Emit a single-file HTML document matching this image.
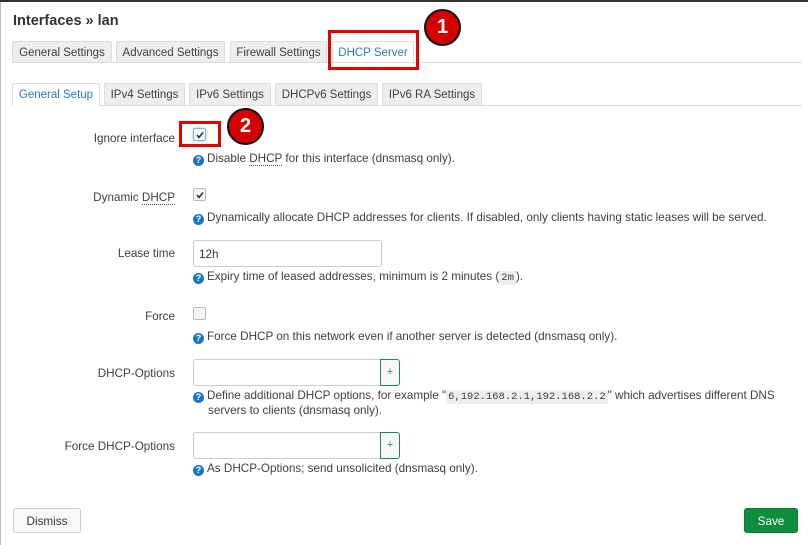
<!DOCTYPE html>
<html><head><meta charset="utf-8"><style>
*{box-sizing:border-box;margin:0;padding:0}
body{width:808px;height:545px;background:#fff;font-family:"Liberation Sans",sans-serif;font-size:11.7px;color:#404040;position:relative;overflow:hidden}
.a{position:absolute}
.topbar{left:0;top:0;width:808px;height:2px;background:#333}
.lborder{left:0;top:2px;width:1px;height:543px;background:#bbb}
h1{position:absolute;left:13px;top:13px;font-size:14.5px;font-weight:bold;color:#333}
.tab{position:absolute;height:22px;border:1px solid #ddd;border-bottom:none;background:#eee;color:#404040;line-height:22px;text-align:center;font-size:11.5px;border-radius:2px 2px 0 0;white-space:nowrap}
.tab.on{background:#fff;color:#2a7ab9;height:23px}
.line{position:absolute;height:1px;background:#ddd}
.lbl{position:absolute;right:633px;text-align:right;white-space:nowrap}
.help{position:absolute;left:193px;white-space:nowrap;line-height:14px}
.q{display:inline-block;width:11px;height:11px;border-radius:50%;background:#1c74c7;color:#fff;font-size:9px;font-weight:bold;text-align:center;line-height:11px;vertical-align:-1px;margin-right:3px}
.cb{position:absolute;width:13px;height:13px;border:1px solid #bbb;border-radius:2px;background:#f6f6f6}
.cb svg{position:absolute;left:1px;top:1px}
.inp{position:absolute;height:27px;border:1px solid #ccc;border-radius:3px;background:#fff;padding-left:5px;line-height:27px;color:#333}
.plus{position:absolute;width:20px;height:27px;border:1px solid #1e8a4c;border-radius:0 3px 3px 0;background:#f8f8f8;color:#1e8a4c;text-align:center;line-height:25px;font-size:11px}
code{font-family:"Liberation Mono",monospace;font-size:10.5px;background:#eee;padding:1px 2px}
.red{position:absolute;border:3px solid #e00000}
.circ{position:absolute;width:37px;height:37px;border-radius:50%;background:#d40000;border:2px solid #111;color:#fff;font-weight:bold;font-size:20px;text-align:center;line-height:33px}
.btn{position:absolute;height:25px;border-radius:3px;text-align:center;line-height:26px}
</style></head><body>
<div class="a topbar"></div><div class="a lborder"></div>
<h1>Interfaces » lan</h1>
<div class="tab" style="left:12px;top:41px;width:100px">General Settings</div>
<div class="tab" style="left:116px;top:41px;width:109px">Advanced Settings</div>
<div class="tab" style="left:230px;top:41px;width:97px">Firewall Settings</div>
<div class="tab on" style="left:332px;top:41px;width:82px">DHCP Server</div>
<div class="line" style="left:12px;top:62px;width:790px"></div>
<div class="red" style="left:328px;top:30px;width:91px;height:40px"></div>
<div class="circ" style="left:424px;top:9px">1</div>

<div class="tab" style="left:104px;top:83px;width:81px">IPv4 Settings</div>
<div class="tab" style="left:189px;top:83px;width:82px">IPv6 Settings</div>
<div class="tab" style="left:275px;top:83px;width:103px">DHCPv6 Settings</div>
<div class="tab" style="left:382px;top:83px;width:100px">IPv6 RA Settings</div>
<div class="line" style="left:12px;top:105px;width:790px"></div>
<div class="tab on" style="left:12px;top:83px;width:88px">General Setup</div>

<div class="lbl" style="top:132px">Ignore interface</div>
<div class="cb" style="left:193px;top:128px;border-color:#8ab4e0;box-shadow:0 0 3px #9cc4ee"><svg width="10" height="10"><path d="M2 5l2 2.5 4-5" stroke="#333" stroke-width="1.6" fill="none"/></svg></div>
<div class="red" style="left:179px;top:121px;width:42px;height:26px"></div>
<div class="circ" style="left:227px;top:108px">2</div>
<div class="help" style="top:152px"><span class="q">?</span>Disable <span style="border-bottom:1px dotted #555">DHCP</span> for this interface (dnsmasq only).</div>

<div class="lbl" style="top:191px">Dynamic <span style="border-bottom:1px dotted #555">DHCP</span></div>
<div class="cb" style="left:193px;top:188px"><svg width="10" height="10"><path d="M2 5l2 2.5 4-5" stroke="#333" stroke-width="1.6" fill="none"/></svg></div>
<div class="help" style="top:211px"><span class="q">?</span>Dynamically allocate DHCP addresses for clients. If disabled, only clients having static leases will be served.</div>

<div class="lbl" style="top:247px">Lease time</div>
<div class="inp" style="left:193px;top:240px;width:189px">12h</div>
<div class="help" style="top:270px"><span class="q">?</span>Expiry time of leased addresses, minimum is 2 minutes (<code>2m</code>).</div>

<div class="lbl" style="top:310px">Force</div>
<div class="cb" style="left:193px;top:307px"></div>
<div class="help" style="top:330px"><span class="q">?</span>Force DHCP on this network even if another server is detected (dnsmasq only).</div>

<div class="lbl" style="top:367px">DHCP-Options</div>
<div class="inp" style="left:193px;top:359px;width:188px;border-radius:3px 0 0 3px"></div>
<div class="plus" style="left:380px;top:359px">+</div>
<div class="help" style="top:389px"><span class="q">?</span>Define additional DHCP options, for example "<code>6,192.168.2.1,192.168.2.2</code>" which advertises different DNS<br><span style="padding-left:15px">servers to clients (dnsmasq only).</span></div>

<div class="lbl" style="top:440px">Force DHCP-Options</div>
<div class="inp" style="left:193px;top:432px;width:188px;border-radius:3px 0 0 3px"></div>
<div class="plus" style="left:380px;top:432px">+</div>
<div class="help" style="top:462px"><span class="q">?</span>As DHCP-Options; send unsolicited (dnsmasq only).</div>

<div class="btn" style="left:13px;top:508px;width:68px;border:1px solid #ccc;background:#f9f9f9;color:#333">Dismiss</div>
<div class="btn" style="left:744px;top:508px;width:54px;background:#0f8d3f;border:1px solid #0a7a35;color:#fff">Save</div>
</body></html>
